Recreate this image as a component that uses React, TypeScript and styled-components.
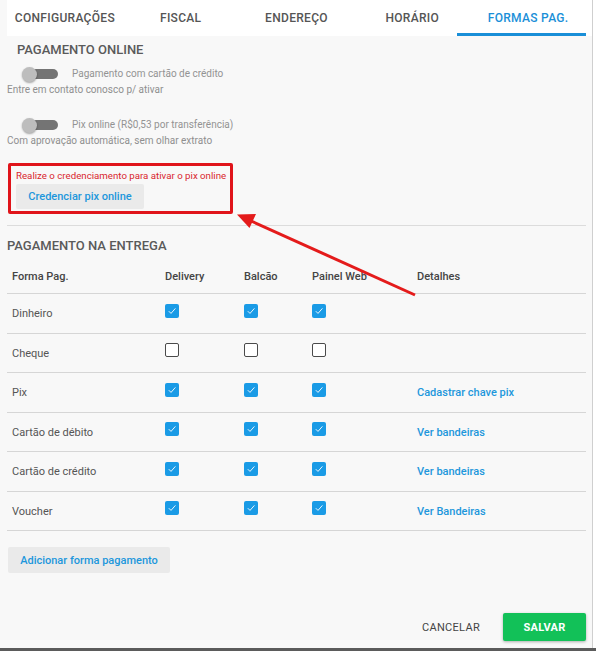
import React from "react";
import styled, { createGlobalStyle, css } from "styled-components";

const Global = createGlobalStyle`
  html, body { margin: 0; padding: 0; background: #fff; }
  body { font-family: Roboto, "Liberation Sans", Arial, sans-serif; }
  * { box-sizing: border-box; }
`;

const Frame = styled.div`
  position: relative;
  width: 596px;
  height: 651px;
  display: flex;
  flex-direction: column;
  background: #fff;
  overflow: hidden;
`;

const Dialog = styled.div`
  width: 593px;
  height: 648px;
  background: #f8f8f8;
  border-right: 1px solid #cfcfcf;
  padding: 0 6px 0 7px;
  display: flex;
  flex-direction: column;
`;

const BottomBar = styled.div`
  height: 3px;
  background: #5b5b5b;
`;

const TabBar = styled.div`
  display: grid;
  grid-template-columns: repeat(5, 1fr);
  height: 36px;
  background: #fff;
  margin-right: -6px;
  padding-right: 6px;
`;

const Tab = styled.div<{ $active?: boolean }>`
  position: relative;
  display: flex;
  align-items: center;
  justify-content: center;
  font-size: 12px;
  font-weight: 500;
  letter-spacing: 0.3px;
  color: ${(p) => (p.$active ? "#1a8fd8" : "#555")};
  ${(p) =>
    p.$active &&
    css`
      &::after {
        content: "";
        position: absolute;
        left: -13px;
        right: 0;
        bottom: 0;
        height: 3px;
        background: #1a8fd8;
      }
    `}
`;

const SectionTitle = styled.div<{ $indent?: number; $mt: number }>`
  font-size: 13px;
  font-weight: 500;
  color: #5a5a5a;
  line-height: 16px;
  margin-top: ${(p) => p.$mt}px;
  padding-left: ${(p) => p.$indent ?? 0}px;
`;

const SwitchRow = styled.div<{ $mt: number }>`
  display: flex;
  align-items: center;
  height: 20px;
  margin-top: ${(p) => p.$mt}px;
  padding-left: 15px;
  gap: 14px;
`;

const SwitchTrack = styled.span`
  position: relative;
  display: block;
  width: 33px;
  height: 10px;
  margin-left: 3px;
  border-radius: 5px;
  background: #747474;
  &::before {
    content: "";
    position: absolute;
    left: -3px;
    top: -2.5px;
    width: 15px;
    height: 15px;
    border-radius: 50%;
    background: #bdbdbd;
    box-shadow: 0 1px 2px rgba(0, 0, 0, 0.35);
  }
`;

const SwitchLabel = styled.span`
  font-size: 10px;
  color: #939393;
  line-height: 12px;
`;

const Hint = styled.div`
  font-size: 10px;
  color: #8f8f8f;
  line-height: 12px;
`;

const AlertBox = styled.div`
  margin-top: 16px;
  margin-left: 1px;
  width: 225px;
  border: 3px solid #e0141a;
  border-radius: 2px;
  padding: 4px 4px 2px 5px;
  display: flex;
  flex-direction: column;
  align-items: flex-start;
  gap: 2px;
`;

const AlertText = styled.div`
  font-size: 9.7px;
  color: #d9262e;
  line-height: 12px;
  white-space: nowrap;
`;

const SoftButton = styled.button<{ $w: number; $h: number; $fs: number }>`
  width: ${(p) => p.$w}px;
  height: ${(p) => p.$h}px;
  border: none;
  border-radius: 2px;
  background: #eaeaea;
  color: #1d97dc;
  font-family: inherit;
  font-size: ${(p) => p.$fs}px;
  font-weight: 500;
  padding: 0;
  cursor: pointer;
`;

const Divider = styled.div`
  margin-top: 11px;
  height: 1px;
  background: #dcdcdc;
`;

const TableRow = styled.div<{ $header?: boolean }>`
  display: grid;
  grid-template-columns: 153px 79px 68px 105px 1fr;
  align-items: center;
  height: ${(p) => (p.$header ? "34px" : "39.5px")};
  border-bottom: 1px solid #d6d6d6;
  margin-top: ${(p) => (p.$header ? "6px" : "0")};
  padding-top: ${(p) => (p.$header ? "0" : "1px")};
`;

const Cell = styled.div<{ $head?: boolean }>`
  padding-left: 5px;
  font-size: 11px;
  font-weight: ${(p) => (p.$head ? 500 : 400)};
  color: ${(p) => (p.$head ? "#444" : "#555")};
  display: flex;
  align-items: center;
  white-space: nowrap;
`;

const Link = styled.span`
  font-size: 11px;
  font-weight: 500;
  color: #1d97dc;
`;

const Box = styled.span<{ $checked: boolean }>`
  width: 14px;
  height: 14px;
  margin-bottom: 6px;
  border-radius: 2px;
  display: flex;
  align-items: center;
  justify-content: center;
  ${(p) =>
    p.$checked
      ? css`
          background: #1a9be6;
        `
      : css`
          background: #fff;
          border: 1.3px solid #4a4a4a;
        `}
`;

const AddWrap = styled.div`
  margin-top: 16px;
  margin-left: 1px;
`;

const Footer = styled.div`
  margin-top: auto;
  margin-bottom: 7px;
  display: flex;
  justify-content: flex-end;
  align-items: center;
  gap: 11px;
`;

const CancelButton = styled.button`
  height: 28px;
  padding: 0 12px;
  border: none;
  background: transparent;
  font-family: inherit;
  font-size: 11px;
  letter-spacing: 0.3px;
  color: #444;
`;

const SaveButton = styled.button`
  width: 83px;
  height: 28px;
  border: none;
  border-radius: 2px;
  background: #12c158;
  color: #fff;
  font-family: inherit;
  font-size: 11px;
  font-weight: 700;
  letter-spacing: 0.3px;
  box-shadow: 0 1px 3px rgba(0, 0, 0, 0.3);
`;

const Overlay = styled.svg`
  position: absolute;
  left: 0;
  top: 0;
  pointer-events: none;
`;

const Check = ({ checked }: { checked: boolean }) => (
  <Box $checked={checked}>
    {checked && (
      <svg width="10" height="10" viewBox="0 0 10 10">
        <path d="M1.8 5.2 L4 7.4 L8.4 2.4" fill="none" stroke="#fff" strokeWidth="0.9" />
      </svg>
    )}
  </Box>
);

type Row = { name: string; d: boolean; b: boolean; p: boolean; link?: string };

const rows: Row[] = [
  { name: "Dinheiro", d: true, b: true, p: true },
  { name: "Cheque", d: false, b: false, p: false },
  { name: "Pix", d: true, b: true, p: true, link: "Cadastrar chave pix" },
  { name: "Cartão de débito", d: true, b: true, p: true, link: "Ver bandeiras" },
  { name: "Cartão de crédito", d: true, b: true, p: true, link: "Ver bandeiras" },
  { name: "Voucher", d: true, b: true, p: true, link: "Ver Bandeiras" },
];

const tabs = ["CONFIGURAÇÕES", "FISCAL", "ENDEREÇO", "HORÁRIO", "FORMAS PAG."];

export default function App() {
  return (
    <Frame>
      <Global />
      <Dialog>
        <TabBar>
          {tabs.map((t, i) => (
            <Tab key={t} $active={i === 4}>
              {t}
            </Tab>
          ))}
        </TabBar>

        <SectionTitle $mt={6} $indent={10}>PAGAMENTO ONLINE</SectionTitle>
        <SwitchRow $mt={6}>
          <SwitchTrack />
          <SwitchLabel>Pagamento com cartão de crédito</SwitchLabel>
        </SwitchRow>
        <Hint>Entre em contato conosco p/ ativar</Hint>
        <SwitchRow $mt={19}>
          <SwitchTrack />
          <SwitchLabel>Pix online (R$0,53 por transferência)</SwitchLabel>
        </SwitchRow>
        <Hint>Com aprovação automática, sem olhar extrato</Hint>

        <AlertBox>
          <AlertText>Realize o credenciamento para ativar o pix online</AlertText>
          <SoftButton $w={128} $h={25} $fs={11}>Credenciar pix online</SoftButton>
        </AlertBox>

        <Divider />

        <SectionTitle $mt={12}>PAGAMENTO NA ENTREGA</SectionTitle>

        <TableRow $header>
          <Cell $head>Forma Pag.</Cell>
          <Cell $head>Delivery</Cell>
          <Cell $head>Balcão</Cell>
          <Cell $head>Painel Web</Cell>
          <Cell $head>Detalhes</Cell>
        </TableRow>
        {rows.map((r) => (
          <TableRow key={r.name}>
            <Cell>{r.name}</Cell>
            <Cell>
              <Check checked={r.d} />
            </Cell>
            <Cell>
              <Check checked={r.b} />
            </Cell>
            <Cell>
              <Check checked={r.p} />
            </Cell>
            <Cell>{r.link && <Link>{r.link}</Link>}</Cell>
          </TableRow>
        ))}

        <AddWrap>
          <SoftButton $w={162} $h={26} $fs={11}>Adicionar forma pagamento</SoftButton>
        </AddWrap>

        <Footer>
          <CancelButton>CANCELAR</CancelButton>
          <SaveButton>SALVAR</SaveButton>
        </Footer>
      </Dialog>
      <BottomBar />

      <Overlay width="596" height="651" viewBox="0 0 596 651">
        <line x1="415" y1="295" x2="250" y2="220.5" stroke="#e41b1b" strokeWidth="3" />
        <polygon points="237,214.5 249.5,228 256,214" fill="#e41b1b" />
      </Overlay>
    </Frame>
  );
}
